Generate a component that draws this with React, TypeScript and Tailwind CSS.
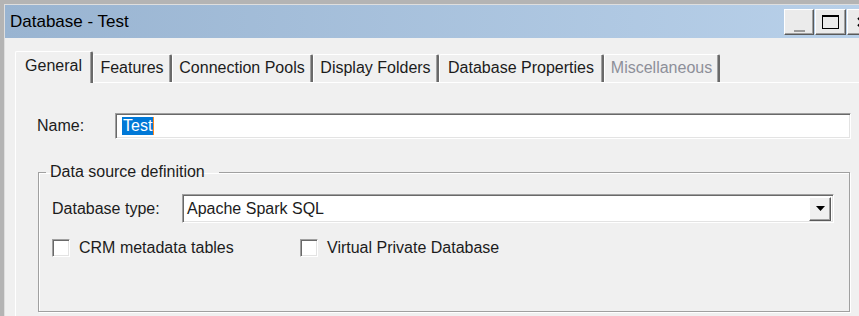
const tabs = [
  { label: "General", w: "w-[78px]", selected: true },
  { label: "Features", w: "w-[79px]" },
  { label: "Connection Pools", w: "w-[141px]" },
  { label: "Display Folders", w: "w-[126px]" },
  { label: "Database Properties", w: "w-[165px]" },
  { label: "Miscellaneous", w: "w-[116px]", disabled: true },
];

function TitleButton({ children, w }: { children: React.ReactNode; w: string }) {
  return (
    <div
      className={`${w} h-[26px] flex items-center justify-center bg-[#ebebeb] border border-t-white border-l-white border-r-[#5a5a5a] border-b-[#5a5a5a] shadow-[inset_-1px_-1px_0_#a0a0a0]`}
    >
      {children}
    </div>
  );
}

function Checkbox({ label, w }: { label: string; w?: string }) {
  return (
    <div className={`flex items-center gap-[9px] ${w ?? ""}`}>
      <div className="w-[18px] h-[18px] bg-white border border-t-[#a0a0a0] border-l-[#a0a0a0] border-r-white border-b-white shadow-[inset_1px_1px_0_#696969,inset_-1px_-1px_0_#e3e3e3]" />
      <span>{label}</span>
    </div>
  );
}

export default function App() {
  return (
    <div className="w-[859px] h-[316px] overflow-hidden bg-[#b4b4b4] pt-[4px] pl-[4px] font-['Liberation_Sans',Arial,sans-serif] text-[16px] text-[#1c1c1c]">
      <div className="w-[875px] h-full bg-[#f0f0f0] border-t border-l border-[#dedede]">
        {/* title bar */}
        <div className="h-[33px] flex items-start bg-gradient-to-r from-[#99b4d1] to-[#b9d1ea]">
          <div className="pl-[5px] h-full flex items-center text-[17px] text-black">Database - Test</div>
          <div className="ml-auto flex gap-[1px] pt-[4px] pr-[2px]">
            <TitleButton w="w-[30px]">
              <div className="w-[11px] h-[2px] bg-[#9a9a9a] mt-[17px]" />
            </TitleButton>
            <TitleButton w="w-[31px]">
              <div className="w-[17px] h-[14px] border border-t-2 border-black" />
            </TitleButton>
            <TitleButton w="w-[30px]">
              <svg width="10" height="10" viewBox="0 0 10 10">
                <path d="M1 1 L9 9 M9 1 L1 9" stroke="#000" strokeWidth="2" />
              </svg>
            </TitleButton>
          </div>
        </div>

        {/* body */}
        <div className="pl-[10px] pt-[13px]">
          <div className="flex items-end h-[31px] pl-[2px] relative z-10">
            {tabs.map((t) => (
              <div
                key={t.label}
                className={`${t.w} flex items-center justify-center border-l border-t border-white border-r-2 border-r-[#696969] shadow-[inset_-1px_0_0_#a0a0a0] rounded-t-[2px] ${
                  t.selected ? "h-[32px] -mb-[1px] -ml-[2px] pb-[4px] bg-[#f0f0f0]" : "h-[28px] pb-[2px]"
                } ${t.disabled ? "text-[#8d8f99]" : ""}`}
              >
                {t.label}
              </div>
            ))}
          </div>

          <div className="border-l border-t border-white h-[240px] pl-[21px] pt-[30px]">
            {/* name row */}
            <div className="flex items-center">
              <div className="w-[78px]">Name:</div>
              <div className="w-[736px] h-[26px] bg-white flex items-center pl-[6px] border border-t-[#a0a0a0] border-l-[#a0a0a0] border-r-white border-b-white shadow-[inset_1px_1px_0_#696969,inset_-1px_-1px_0_#e3e3e3]">
                <span className="bg-[#0078d7] text-white leading-[18px] px-[1px] border-r border-[#ff8a1f]">Test</span>
              </div>
            </div>

            {/* group */}
            <fieldset className="ml-[1px] mt-[21px] w-[812px] h-[152px] border border-[#a0a0a0] shadow-[1px_1px_0_#fff,inset_1px_1px_0_#fff]">
              <legend className="ml-[7px] pl-[4px] pr-[14px]">Data source definition</legend>
              <div className="flex items-center mt-[10px] pl-[13px]">
                <div className="w-[130px]">Database type:</div>
                <div className="w-[652px] h-[29px] bg-white flex items-center border border-t-[#a0a0a0] border-l-[#a0a0a0] border-r-white border-b-white shadow-[inset_1px_1px_0_#696969,inset_-1px_-1px_0_#e3e3e3] pl-[4px] pr-[2px]">
                  <span>Apache Spark SQL</span>
                  <div className="ml-auto w-[22px] h-[24px] flex items-center justify-center bg-[#f0f0f0] border border-t-white border-l-white border-r-[#5a5a5a] border-b-[#5a5a5a] shadow-[inset_-1px_-1px_0_#a0a0a0]">
                    <svg width="9" height="5" viewBox="0 0 9 5">
                      <path d="M0 0 H9 L4.5 5 Z" fill="#000" />
                    </svg>
                  </div>
                </div>
              </div>
              <div className="flex items-center mt-[13px] pl-[13px]">
                <Checkbox label="CRM metadata tables" w="w-[248px]" />
                <Checkbox label="Virtual Private Database" />
              </div>
            </fieldset>
          </div>
        </div>
      </div>
    </div>
  );
}
